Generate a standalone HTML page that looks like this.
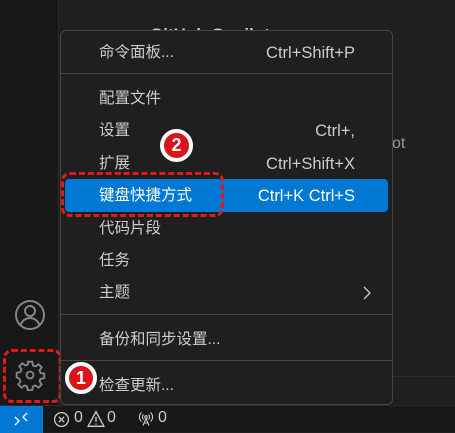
<!DOCTYPE html>
<html><head><meta charset="utf-8"><style>
*{margin:0;padding:0;box-sizing:border-box}
body{width:455px;height:432px;overflow:hidden;background:#1f1f1f;font-family:"Liberation Sans","Noto Sans CJK SC",sans-serif;position:relative;color:#ccc}
.act{position:absolute;left:0;top:0;width:59px;height:405px;background:#181818;border-right:1px solid #2b2b2b}
.status{position:absolute;left:0;top:405px;width:455px;height:27px;background:#181818;border-top:1px solid #2b2b2b;font-size:16px;color:#ccc}
.remote{position:absolute;left:0;top:0;width:43px;height:27px;background:#0078d4}
.menu{position:absolute;left:60px;top:30px;width:333px;height:375px;background:#1f1f1f;border:1px solid #454545;border-radius:6px;font-size:15.5px}
.it{position:absolute;left:38px;height:20px;line-height:20px;color:#ccc}
.sc{position:absolute;right:37px;height:20px;line-height:20px;color:#ccc;font-size:16.5px}
.sep{position:absolute;left:0;right:0;height:1px;background:#454545}
.hl{position:absolute;left:4px;width:323px;top:148px;height:33px;background:#0078d4;border-radius:4px}
.badge{position:absolute;border-radius:50%;background:#d9141b;border:4px solid #fff;color:#fff;font-weight:bold;text-align:center;font-size:18px}
.dash{position:absolute;border:3px dashed #e01a1a;border-radius:9px}
</style></head><body>
<div style="position:absolute;left:150px;top:25px;font-size:17px;font-weight:bold;color:#ccc">GitHub Copilot</div>
<div style="position:absolute;left:392px;top:135px;font-size:16px;color:#999">ot</div>
<div style="position:absolute;left:393px;top:376px;width:62px;height:1px;background:#2b2b2b"></div>
<div class="act">
<svg style="position:absolute;left:14px;top:299px" width="32" height="32" viewBox="0 0 32 32" fill="none" stroke="#858585" stroke-width="2"><circle cx="16" cy="16" r="14"/><circle cx="16" cy="12" r="5"/><path d="M6.5 26c2-5 6-7 9.5-7s7.5 2 9.5 7"/></svg>
<svg style="position:absolute;left:14px;top:359px" width="32" height="32" viewBox="0 0 24 24" fill="none" stroke="#858585" stroke-width="1.4"><path d="M10.3 2h3.4l.5 2.8 1.9.8 2.3-1.7 2.4 2.4-1.7 2.3.8 1.9 2.8.5v3.4l-2.8.5-.8 1.9 1.7 2.3-2.4 2.4-2.3-1.7-1.9.8-.5 2.8h-3.4l-.5-2.8-1.9-.8-2.3 1.7-2.4-2.4 1.7-2.3-.8-1.9L2 13.7v-3.4l2.8-.5.8-1.9-1.7-2.3 2.4-2.4 2.3 1.7 1.9-.8z"/><circle cx="12" cy="12" r="2.6"/></svg>
</div>
<div class="dash" style="left:3px;top:349px;width:59px;height:54px"></div>
<div class="status"><div class="remote"><svg style="position:absolute;left:13px;top:5px" width="16" height="16" viewBox="0 0 16 16" fill="none" stroke="#fff" stroke-width="1.3"><path d="M2 6l4 4-4 4M14 2l-4 4 4 4"/></svg></div>
<svg style="position:absolute;left:53px;top:5px" width="17" height="17" viewBox="0 0 16 16" fill="none" stroke="#ccc" stroke-width="1.2"><circle cx="8" cy="8" r="6.5"/><path d="M5.5 5.5l5 5M10.5 5.5l-5 5"/></svg>
<span style="position:absolute;left:74px;top:3px">0</span>
<svg style="position:absolute;left:87px;top:4px" width="18" height="18" viewBox="0 0 16 16" fill="none" stroke="#ccc" stroke-width="1.2"><path d="M8 1.5L15 14.5H1z"/><path d="M8 6v4.5M8 12v1"/></svg>
<span style="position:absolute;left:107px;top:3px">0</span>
<svg style="position:absolute;left:138px;top:5px" width="16" height="16" viewBox="0 0 16 16" fill="none" stroke="#ccc" stroke-width="1.1"><circle cx="8" cy="6" r="1.3"/><path d="M5.5 3.5a3.5 3.5 0 000 5M10.5 3.5a3.5 3.5 0 010 5M3.5 1.5a6 6 0 000 9M12.5 1.5a6 6 0 010 9M8 7.5l-3 7M8 7.5l3 7M6 12h4"/></svg>
<span style="position:absolute;left:158px;top:3px">0</span>
</div>
<div class="menu">
<div class="it" style="top:12px">命令面板...</div><div class="sc" style="top:12px">Ctrl+Shift+P</div>
<div class="sep" style="top:42px"></div>
<div class="it" style="top:58px">配置文件</div>
<div class="it" style="top:90px">设置</div><div class="sc" style="top:90px">Ctrl+,</div>
<div class="it" style="top:123px">扩展</div><div class="sc" style="top:123px">Ctrl+Shift+X</div>
<div class="hl"></div>
<div class="it" style="top:155px;color:#fff">键盘快捷方式</div><div class="sc" style="top:155px;color:#fff">Ctrl+K Ctrl+S</div>
<div class="it" style="top:188px">代码片段</div>
<div class="it" style="top:220px">任务</div>
<div class="it" style="top:252px">主题</div>
<svg style="position:absolute;left:300px;top:254px" width="12" height="16" viewBox="0 0 12 16" fill="none" stroke="#ccc" stroke-width="1.3"><path d="M3 2l6 6-6 6"/></svg>
<div class="sep" style="top:283px"></div>
<div class="it" style="top:299px">备份和同步设置...</div>
<div class="sep" style="top:329px"></div>
<div class="it" style="top:345px">检查更新...</div>
</div>
<div class="dash" style="left:61px;top:172px;width:163px;height:45px"></div>
<div class="badge" style="left:160px;top:129px;width:33px;height:33px;line-height:25px">2</div>
<div class="badge" style="left:65px;top:362px;width:32px;height:32px;line-height:24px">1</div>
</body></html>
